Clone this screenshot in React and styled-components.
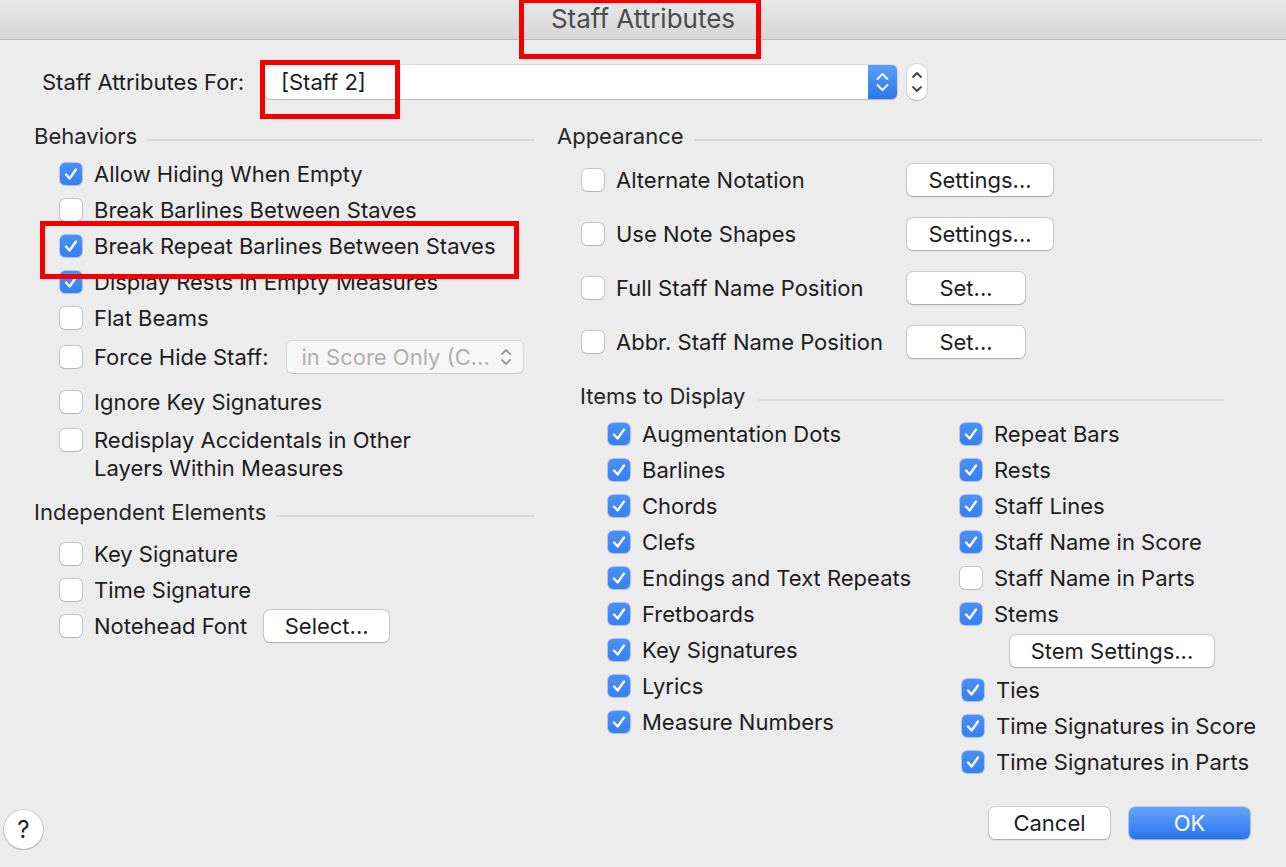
import React from "react";
import styled, { createGlobalStyle } from "styled-components";

const GlobalStyle = createGlobalStyle`
  html, body { margin: 0; padding: 0; background: #ececec; }
  body {
    font-family: Inter, "Liberation Sans", Arial, sans-serif;
    width: 1286px; height: 867px; overflow: hidden;
  }
  * { box-sizing: border-box; }
`;

const Window = styled.div`
  position: relative;
  width: 1286px;
  height: 867px;
  display: flex;
  flex-direction: column;
  background: #ececec;
  color: #1d1d1d;
  font-size: 22px;
`;

const TitleBar = styled.div`
  height: 40px;
  flex: none;
  display: flex;
  align-items: center;
  justify-content: center;
  background: linear-gradient(#e8e8e8, #d6d6d6);
  border-bottom: 1px solid #bdbdbd;
  font-size: 26px;
  color: #4b4b4b;
  padding-bottom: 2px;
`;

const Content = styled.div`
  flex: 1;
  padding: 25px 24px 0 34px;
  display: flex;
  flex-direction: column;
`;

const TopRow = styled.div`
  display: flex;
  align-items: center;
  height: 34px;
  margin-left: 8px;
`;

const FieldLabel = styled.span`
  white-space: nowrap;
`;

const PopUp = styled.div`
  margin-left: 21px;
  width: 632px;
  height: 34px;
  display: flex;
  background: #fff;
  border-radius: 5px;
  box-shadow: 0 0 0 1px rgba(0, 0, 0, 0.08), 0 1px 1px rgba(0, 0, 0, 0.15);
`;

const PopText = styled.span`
  flex: 1;
  display: flex;
  align-items: center;
  padding-left: 16px;
`;

const PopArrows = styled.span`
  width: 29px;
  display: flex;
  align-items: center;
  justify-content: center;
  border-radius: 0 5px 5px 0;
  background: linear-gradient(#5a9ff9, #2c76ee);
`;

const Stepper = styled.span`
  margin-left: 10px;
  width: 20px;
  height: 36px;
  display: flex;
  align-items: center;
  justify-content: center;
  background: #fff;
  border-radius: 9px;
  box-shadow: 0 0 0 1px rgba(0, 0, 0, 0.1), 0 1px 1px rgba(0, 0, 0, 0.12);
`;

const Columns = styled.div`
  display: flex;
  margin-top: 23px;
`;

const LeftCol = styled.div`
  width: 500px;
  display: flex;
  flex-direction: column;
`;

const RightCol = styled.div`
  width: 705px;
  margin-left: 23px;
  display: flex;
  flex-direction: column;
`;

const Header = styled.div`
  display: flex;
  align-items: center;
  height: 28px;
  margin-top: ${(p) => p.$mt || 0}px;
  margin-left: ${(p) => p.$ml || 0}px;
  color: #262626;
  white-space: nowrap;
  &::after {
    content: "";
    flex: 1;
    height: 2px;
    margin-left: ${(p) => p.$lineGap || 10}px;
    margin-top: 8px;
    background: #d9d9d9;
  }
`;

const RowList = styled.div`
  display: flex;
  flex-direction: column;
  margin-top: ${(p) => p.$mt || 0}px;
  padding-left: ${(p) => p.$pl || 0}px;
`;

const Row = styled.div`
  display: flex;
  align-items: ${(p) => (p.$top ? "flex-start" : "center")};
  height: ${(p) => p.$h || 36}px;
  margin-top: ${(p) => p.$mt || 0}px;
  margin-left: ${(p) => p.$shift || 0}px;
  white-space: nowrap;
`;

const Label = styled.span`
  margin-left: 12px;
  line-height: 28px;
  color: ${(p) => (p.$disabled ? "#a9a9a9" : "#1d1d1d")};
`;

const Box = styled.span`
  flex: none;
  width: 22px;
  height: 22px;
  margin-top: ${(p) => p.$mt || 0}px;
  border-radius: 5px;
  display: inline-flex;
  align-items: center;
  justify-content: center;
  background: ${(p) => (p.$checked ? "linear-gradient(#4a90f7, #3580f3)" : "#fff")};
  box-shadow: ${(p) =>
    p.$checked
      ? "0 0 0 0.5px rgba(40,100,220,0.6)"
      : "0 0 0 1px rgba(0,0,0,0.16), 0 1px 1px rgba(0,0,0,0.08)"};
`;

const Button = styled.button`
  font: inherit;
  font-size: 22px;
  color: #1d1d1d;
  width: ${(p) => p.$w}px;
  height: 32px;
  margin-left: ${(p) => p.$ml || 0}px;
  padding: 0;
  background: #fff;
  border: none;
  border-radius: 6px;
  box-shadow: 0 0 0 1px rgba(0, 0, 0, 0.13), 0 1px 1.5px rgba(0, 0, 0, 0.18);
  display: inline-flex;
  align-items: center;
  justify-content: center;
  white-space: nowrap;
`;

const PrimaryButton = styled(Button)`
  color: #fff;
  background: linear-gradient(#62a6fb, #2a74ef);
  box-shadow: 0 0 0 0.5px rgba(30, 90, 210, 0.5), 0 1px 1.5px rgba(0, 0, 0, 0.18);
`;

const SmallPopUp = styled.div`
  margin-left: 18px;
  width: 236px;
  height: 32px;
  display: flex;
  align-items: center;
  justify-content: space-between;
  padding: 0 10px 0 15px;
  background: #f6f6f6;
  border-radius: 5px;
  box-shadow: 0 0 0 1px rgba(0, 0, 0, 0.08), 0 1px 1px rgba(0, 0, 0, 0.06);
  color: #b0b0b0;
`;

const AppearanceGrid = styled.div`
  display: grid;
  grid-template-columns: 22px 279px auto;
  column-gap: 12px;
  grid-auto-rows: 54px;
  align-items: center;
  margin-top: 3px;
  padding-left: 25px;
  white-space: nowrap;
`;

const ItemsSection = styled.div`
  width: 644px;
  margin-left: 23px;
  margin-top: 13px;
  display: flex;
  flex-direction: column;
`;

const ItemsGrid = styled.div`
  display: grid;
  grid-template-columns: 352px 1fr;
  margin-top: 6px;
  padding-left: 28px;
`;

const Footer = styled.div`
  flex: none;
  height: 74px;
  display: flex;
  align-items: flex-start;
  padding: 14px 36px 0 4px;
`;

const HelpButton = styled.span`
  width: 39px;
  height: 39px;
  margin-top: 3px;
  border-radius: 50%;
  background: #fff;
  box-shadow: 0 0 0 1px rgba(0, 0, 0, 0.12), 0 1px 1.5px rgba(0, 0, 0, 0.18);
  display: flex;
  align-items: center;
  justify-content: center;
  font-size: 24px;
  color: #222;
`;

const Spacer = styled.span`
  flex: 1;
`;

const Annotation = styled.div`
  position: absolute;
  left: ${(p) => p.$x}px;
  top: ${(p) => p.$y}px;
  width: ${(p) => p.$w}px;
  height: ${(p) => p.$h}px;
  border: 5px solid #f40000;
  pointer-events: none;
`;

const Check = () => (
  <svg width="22" height="22" viewBox="0 0 22 22">
    <polyline
      points="6,11.5 9.6,15.5 16,6.5"
      fill="none"
      stroke="#fff"
      strokeWidth="2.3"
      strokeLinecap="round"
      strokeLinejoin="round"
    />
  </svg>
);

const CheckBox = ({ checked, mt }) => (
  <Box $checked={checked} $mt={mt}>
    {checked && <Check />}
  </Box>
);

const Item = ({ checked, children, ...rest }) => (
  <Row {...rest}>
    <CheckBox checked={checked} />
    <Label>{children}</Label>
  </Row>
);

const Chevrons = ({ w, h, color, gap = 5, size = 5 }) => {
  const cx = w / 2;
  const cy = h / 2;
  return (
    <svg width={w} height={h} viewBox={`0 0 ${w} ${h}`}>
      <path
        d={`M${cx - size} ${cy - gap} L${cx} ${cy - gap - size} L${cx + size} ${cy - gap}`}
        fill="none"
        stroke={color}
        strokeWidth="1.8"
        strokeLinecap="round"
        strokeLinejoin="round"
      />
      <path
        d={`M${cx - size} ${cy + gap} L${cx} ${cy + gap + size} L${cx + size} ${cy + gap}`}
        fill="none"
        stroke={color}
        strokeWidth="1.8"
        strokeLinecap="round"
        strokeLinejoin="round"
      />
    </svg>
  );
};

const itemsLeft = [
  "Augmentation Dots",
  "Barlines",
  "Chords",
  "Clefs",
  "Endings and Text Repeats",
  "Fretboards",
  "Key Signatures",
  "Lyrics",
  "Measure Numbers",
];

const itemsRightTop = [
  ["Repeat Bars", true],
  ["Rests", true],
  ["Staff Lines", true],
  ["Staff Name in Score", true],
  ["Staff Name in Parts", false],
  ["Stems", true],
];

const itemsRightBottom = ["Ties", "Time Signatures in Score", "Time Signatures in Parts"];

const appearance = [
  ["Alternate Notation", "Settings...", 146],
  ["Use Note Shapes", "Settings...", 146],
  ["Full Staff Name Position", "Set...", 118],
  ["Abbr. Staff Name Position", "Set...", 118],
];

export default function App() {
  return (
    <>
      <GlobalStyle />
      <Window>
        <TitleBar>Staff Attributes</TitleBar>
        <Content>
          <TopRow>
            <FieldLabel>Staff Attributes For:</FieldLabel>
            <PopUp>
              <PopText>[Staff 2]</PopText>
              <PopArrows>
                <Chevrons w={29} h={34} color="#fff" gap={3} size={5} />
              </PopArrows>
            </PopUp>
            <Stepper>
              <Chevrons w={20} h={36} color="#444" gap={5} size={4} />
            </Stepper>
          </TopRow>

          <Columns>
            <LeftCol>
              <Header>Behaviors</Header>
              <RowList $mt={6} $pl={26}>
                <Item checked>Allow Hiding When Empty</Item>
                <Item>Break Barlines Between Staves</Item>
                <Item checked>Break Repeat Barlines Between Staves</Item>
                <Item checked>Display Rests in Empty Measures</Item>
                <Item>Flat Beams</Item>
                <Row $h={42}>
                  <CheckBox />
                  <Label>Force Hide Staff:</Label>
                  <SmallPopUp>
                    <span>in Score Only (C...</span>
                    <Chevrons w={14} h={24} color="#9a9a9a" gap={3} size={4} />
                  </SmallPopUp>
                </Row>
                <Item $mt={6}>Ignore Key Signatures</Item>
                <Row $top $h={56} $mt={6}>
                  <CheckBox mt={3} />
                  <Label>
                    Redisplay Accidentals in Other
                    <br />
                    Layers Within Measures
                  </Label>
                </Row>
              </RowList>

              <Header $mt={16}>Independent Elements</Header>
              <RowList $mt={10} $pl={26}>
                <Item>Key Signature</Item>
                <Item>Time Signature</Item>
                <Row>
                  <CheckBox />
                  <Label>Notehead Font</Label>
                  <Button $w={125} $ml={17}>
                    Select...
                  </Button>
                </Row>
              </RowList>
            </LeftCol>

            <RightCol>
              <Header>Appearance</Header>
              <AppearanceGrid>
                {appearance.map(([label, btn, w]) => (
                  <React.Fragment key={label}>
                    <CheckBox />
                    <span>{label}</span>
                    <Button $w={w}>{btn}</Button>
                  </React.Fragment>
                ))}
              </AppearanceGrid>

              <ItemsSection>
                <Header $lineGap={14}>Items to Display</Header>
                <ItemsGrid>
                  <RowList>
                    {itemsLeft.map((t) => (
                      <Item key={t} checked>
                        {t}
                      </Item>
                    ))}
                  </RowList>
                  <RowList>
                    {itemsRightTop.map(([t, c]) => (
                      <Item key={t} checked={c}>
                        {t}
                      </Item>
                    ))}
                    <Row $h={38}>
                      <Button $w={204} $ml={50}>
                        Stem Settings...
                      </Button>
                    </Row>
                    {itemsRightBottom.map((t, i) => (
                      <Item key={t} checked $shift={2} $mt={i === 0 ? 2 : 0}>
                        {t}
                      </Item>
                    ))}
                  </RowList>
                </ItemsGrid>
              </ItemsSection>
            </RightCol>
          </Columns>
        </Content>

        <Footer>
          <HelpButton>?</HelpButton>
          <Spacer />
          <Button $w={121}>Cancel</Button>
          <PrimaryButton $w={121} $ml={19}>
            OK
          </PrimaryButton>
        </Footer>

        <Annotation $x={519} $y={-2} $w={242} $h={61} />
        <Annotation $x={260} $y={60} $w={140} $h={59} />
        <Annotation $x={40} $y={221} $w={479} $h={58} />
      </Window>
    </>
  );
}
